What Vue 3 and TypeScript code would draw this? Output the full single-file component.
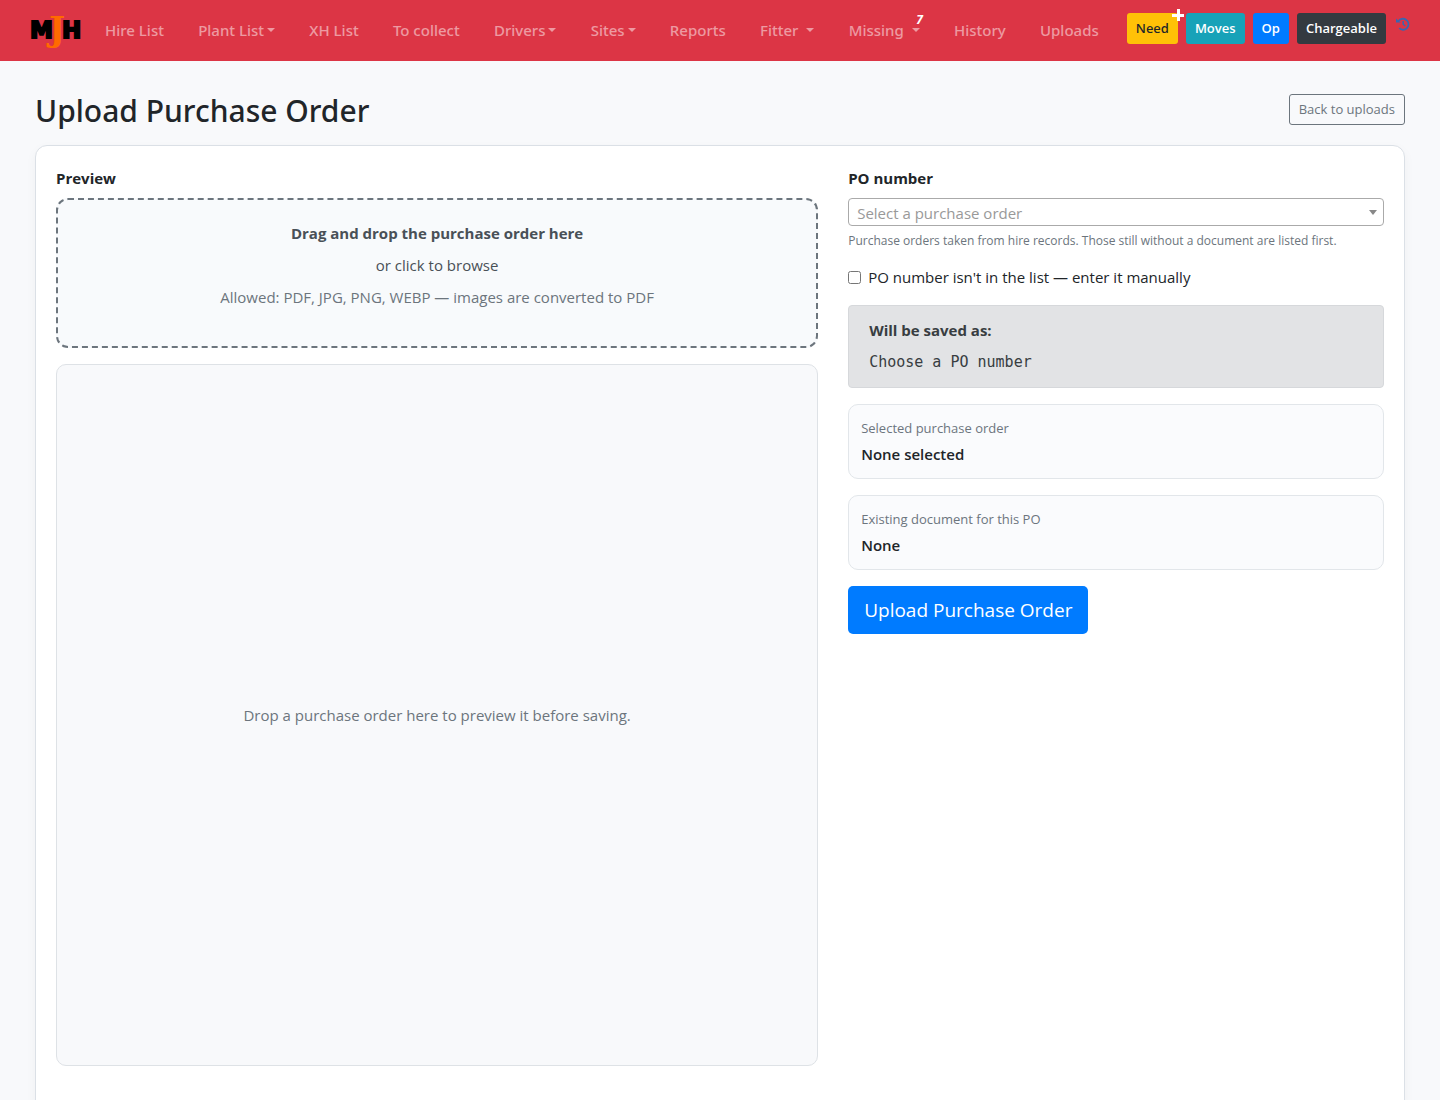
<script setup lang="ts">
import { ref } from 'vue'

interface NavItem {
  label: string
  menu?: boolean
  spaced?: boolean
  badge?: number
}

const navItems: NavItem[] = [
  { label: 'Hire List' },
  { label: 'Plant List', menu: true },
  { label: 'XH List' },
  { label: 'To collect' },
  { label: 'Drivers', menu: true },
  { label: 'Sites', menu: true },
  { label: 'Reports' },
  { label: 'Fitter', menu: true, spaced: true },
  { label: 'Missing', menu: true, spaced: true, badge: 7 },
  { label: 'History' },
  { label: 'Uploads' },
]

const purchaseOrder = ref('')
const manualEntry = ref(false)
</script>

<template>
  <header class="navbar">
    <a class="brand" href="#" aria-label="MJH home">
      <svg width="52" height="44" viewBox="0 0 52 44" aria-hidden="true">
        <text class="brand-letter" x="0" y="29">M</text>
        <text class="brand-letter" x="32" y="29">H</text>
        <text class="brand-j" x="19" y="32">J</text>
      </svg>
    </a>
    <nav class="nav-links" aria-label="Main">
      <a v-for="item in navItems" :key="item.label" class="nav-link" href="#">
        {{ item.label }}<span v-if="item.menu" class="caret" :class="{ spaced: item.spaced }"></span>
        <span v-if="item.badge" class="nav-badge">{{ item.badge }}</span>
      </a>
    </nav>
    <div class="actions">
      <button type="button" class="btn need">Need<span class="plus" aria-hidden="true"></span></button>
      <button type="button" class="btn moves">Moves</button>
      <button type="button" class="btn op">Op</button>
      <button type="button" class="btn chargeable">Chargeable</button>
      <a class="recent" href="#" aria-label="Recent activity">
        <svg width="14" height="14" viewBox="0 0 14 14" fill="none" stroke="currentColor">
          <path d="M2.2 4.6A5.5 5.5 0 1 1 3.2 11.2" stroke-width="1.8" />
          <path d="M0 1.6V5.6H4.6Z" fill="currentColor" stroke="none" />
          <path d="M7.2 4V7.2L9.2 9" stroke-width="1.5" />
        </svg>
      </a>
    </div>
  </header>

  <main class="page">
    <div class="page-head">
      <h1>Upload Purchase Order</h1>
      <a class="back" href="#">Back to uploads</a>
    </div>

    <form class="card" @submit.prevent>
      <section class="column">
        <label class="field-label" for="po-file">Preview</label>
        <label class="dropzone">
          <input id="po-file" class="file-input" type="file" accept=".pdf,.jpg,.png,.webp" />
          <strong>Drag and drop the purchase order here</strong>
          <span>or click to browse</span>
          <span class="muted">Allowed: PDF, JPG, PNG, WEBP — images are converted to PDF</span>
        </label>
        <div class="viewer">Drop a purchase order here to preview it before saving.</div>
      </section>

      <section class="column">
        <label class="field-label" for="po-number">PO number</label>
        <div class="select-wrap">
          <select id="po-number" v-model="purchaseOrder">
            <option value="">Select a purchase order</option>
          </select>
        </div>
        <p class="help">Purchase orders taken from hire records. Those still without a document are listed first.</p>

        <div class="check">
          <input id="manual" v-model="manualEntry" type="checkbox" />
          <label for="manual">PO number isn't in the list — enter it manually</label>
        </div>

        <div class="saved-as">
          <strong>Will be saved as:</strong>
          <code>Choose a PO number</code>
        </div>

        <div class="info">
          <span class="info-label">Selected purchase order</span>
          <span class="info-value">None selected</span>
        </div>
        <div class="info">
          <span class="info-label">Existing document for this PO</span>
          <span class="info-value">None</span>
        </div>

        <button type="submit" class="submit">Upload Purchase Order</button>
      </section>
    </form>
  </main>
</template>

<style>
body {
  margin: 0;
  background: #f8f9fb;
  color: #212529;
  font: 15px/24px "Open Sans", "Noto Sans", sans-serif;
}
</style>

<style scoped>
* {
  box-sizing: border-box;
}

a {
  text-decoration: none;
}

button,
select {
  font-family: inherit;
}

.navbar {
  display: flex;
  align-items: center;
  height: 61px;
  padding: 0 30px;
  background: #dc3545;
}

.brand {
  display: flex;
  margin-right: 23px;
}

.brand svg {
  overflow: visible;
}

.brand-letter {
  font: bold 23px "DejaVu Sans", sans-serif;
  fill: #000;
  stroke: #000;
  stroke-width: 2px;
}

.brand-j {
  font: bold 34px "DejaVu Serif", serif;
  fill: #ff6a00;
}

.nav-links {
  display: flex;
  flex: 1;
  justify-content: space-between;
  padding-bottom: 2px;
  white-space: nowrap;
}

.nav-link {
  position: relative;
  color: rgba(255, 255, 255, 0.5);
  font-family: "Noto Sans", sans-serif;
  font-weight: 500;
}

.caret {
  display: inline-block;
  margin-left: 3px;
  vertical-align: 4px;
  border: 4px solid transparent;
  border-top-color: currentColor;
  border-bottom: 0;
}

.caret.spaced {
  margin-left: 8px;
}

.nav-badge {
  position: absolute;
  top: -10px;
  right: -3px;
  color: #fff;
  font-size: 12px;
  font-style: italic;
  font-weight: 700;
}

.actions {
  display: flex;
  gap: 8px;
  margin-left: 28px;
  margin-bottom: 4px;
}

.btn {
  position: relative;
  height: 31px;
  padding: 0 8px;
  border: 1px solid transparent;
  border-radius: 3px;
  color: #fff;
  font-size: 13px;
  font-weight: 600;
  line-height: 21px;
}

.need {
  background: #ffc107;
  color: #212529;
  font-family: "Noto Sans", sans-serif;
  font-weight: 500;
}

.moves {
  background: #17a2b8;
}

.op {
  background: #007bff;
}

.chargeable {
  background: #343a40;
}

.plus {
  position: absolute;
  top: -5px;
  right: -7px;
  width: 12px;
  height: 12px;
  background:
    linear-gradient(#fff, #fff) 0 5px / 12px 3px no-repeat,
    linear-gradient(#fff, #fff) 5px 0 / 3px 12px no-repeat;
}

.recent {
  margin: 4px 0 0 2px;
  color: #3a66b0;
}

.recent svg {
  display: block;
}

.page {
  padding: 30px 35px;
}

.page-head {
  display: flex;
  align-items: flex-end;
  justify-content: space-between;
  margin-bottom: 14px;
}

h1 {
  margin: 0;
  font-family: "Noto Sans", sans-serif;
  font-size: 30px;
  font-weight: 500;
  line-height: 40px;
}

.back {
  margin-bottom: 6px;
  padding: 4px 9px;
  border: 1px solid #6c757d;
  border-radius: 3px;
  color: #6c757d;
  font-size: 13px;
  line-height: 21px;
}

.card {
  display: grid;
  grid-template-columns: 7fr 5fr;
  padding: 20px 5px 48px;
  border: 1px solid #dbe0e6;
  border-radius: 12px;
  background: #fff;
  box-shadow: 0 4px 12px rgba(0, 0, 0, 0.04);
}

.column {
  min-width: 0;
  padding: 0 15px;
}

.field-label {
  display: block;
  margin-bottom: 8px;
  font-weight: 700;
}

.dropzone {
  position: relative;
  display: flex;
  flex-direction: column;
  align-items: center;
  gap: 8px;
  min-height: 150px;
  margin-bottom: 16px;
  padding: 21px 20px;
  border: 2px dashed #6c757d;
  border-radius: 12px;
  background: #f8fafc;
  color: #495057;
  cursor: pointer;
}

.file-input {
  position: absolute;
  inset: 0;
  width: 100%;
  opacity: 0;
  cursor: pointer;
}

.muted {
  color: #6c757d;
}

.viewer {
  display: flex;
  align-items: center;
  justify-content: center;
  min-height: 702px;
  border: 1px solid #dee2e6;
  border-radius: 10px;
  background: #f8f9fb;
  color: #6c757d;
}

.select-wrap {
  position: relative;
}

.select-wrap::after {
  content: "";
  position: absolute;
  top: 12px;
  right: 7px;
  border: 4px solid transparent;
  border-top: 5px solid #888;
  border-bottom: 0;
  pointer-events: none;
}

select {
  display: block;
  width: 100%;
  height: 28px;
  padding: 2px 8px 0;
  border: 1px solid #aaa;
  border-radius: 4px;
  background: #fff;
  color: #999;
  font-size: 15px;
  appearance: none;
}

.help {
  margin: 5px 0 15px;
  color: #6c757d;
  font-size: 12px;
  line-height: 19px;
}

.check {
  display: flex;
  align-items: center;
  gap: 7px;
  margin-bottom: 16px;
}

.check input {
  width: 13px;
  height: 13px;
  margin: 0;
}

.saved-as {
  display: flex;
  flex-direction: column;
  gap: 8px;
  margin-bottom: 16px;
  padding: 12px 20px;
  border: 1px solid #d6d8db;
  border-radius: 4px;
  background: #e2e3e5;
  color: #383d41;
}

code {
  font: 15px/25px "DejaVu Sans Mono", monospace;
}

.info {
  display: flex;
  flex-direction: column;
  gap: 3px;
  margin-bottom: 16px;
  padding: 12px;
  border: 1px solid #e2e6ea;
  border-radius: 10px;
  background: #fafbfd;
}

.info-label {
  color: #6c757d;
  font-size: 13px;
  line-height: 22px;
}

.info-value {
  font-weight: 600;
}

.submit {
  height: 48px;
  padding: 0 16px;
  border: 0;
  border-radius: 5px;
  background: #007bff;
  color: #fff;
  font-size: 19px;
}
</style>
